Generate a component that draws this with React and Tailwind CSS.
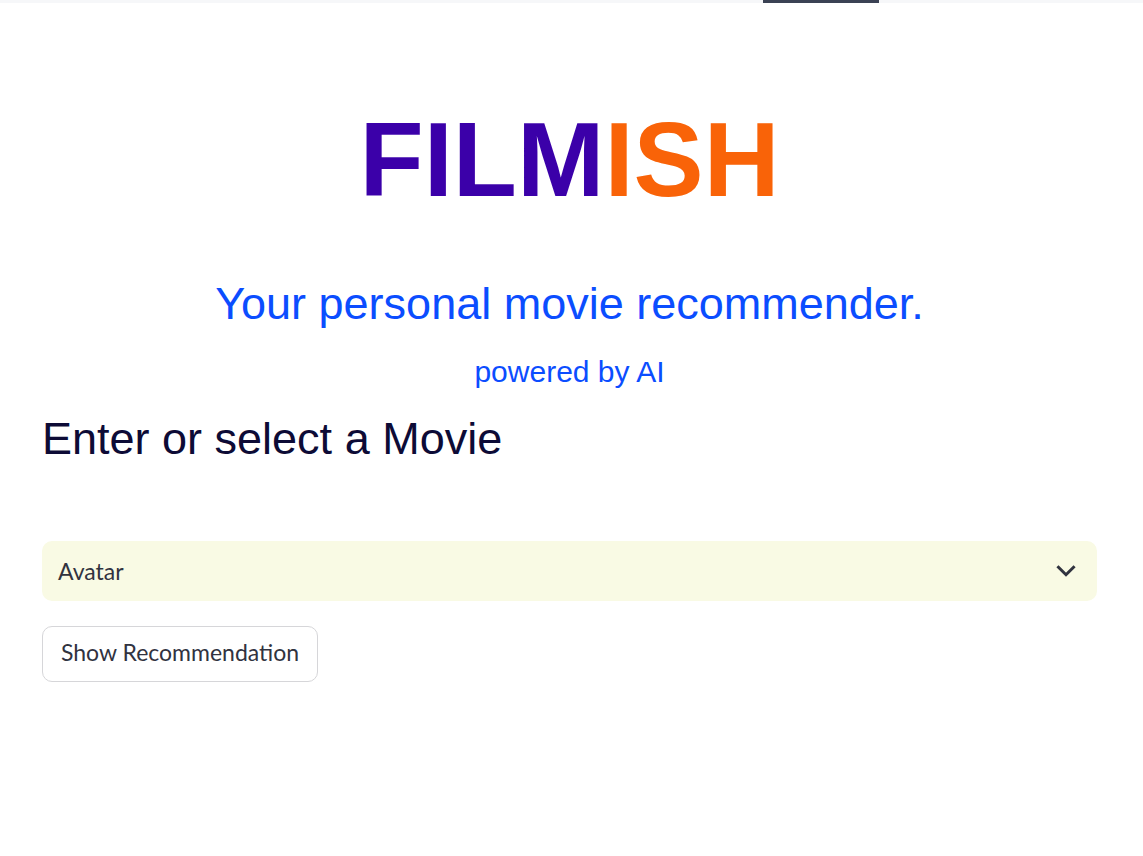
export default function App() {
  return (
    <div className="min-h-screen bg-white">
      {/* top decoration bar */}
      <div className="flex h-[3px] bg-[#f6f7f9]">
        <div className="ml-[763px] h-[3px] w-[116px] bg-[#3b4254]" />
      </div>

      <div className="pl-[42px] pr-[46px] font-['Liberation_Sans',Arial,sans-serif]">
        <h1 className="mt-[104px] text-center text-[105px] font-bold leading-none">
          <span className="text-[#3b00a9]">FILM</span>
          <span className="text-[#f96308]">ISH</span>
        </h1>

        <p className="mt-[69px] text-center text-[45px] leading-none text-[#0b4dff]">
          Your personal movie recommender.
        </p>

        <p className="mt-[31px] text-center text-[30px] leading-none text-[#0b4dff]">
          powered by AI
        </p>

        <h2 className="mt-[29px] text-[45px] leading-none text-[#0d0b36]">
          Enter or select a Movie
        </h2>

        <div className="mt-[80px] flex h-[60px] items-center justify-between rounded-[10px] bg-[#f9fae4] pl-[16px] pr-[16px] font-['Lato',sans-serif] text-[23px] text-[#31333f]">
          <span>Avatar</span>
          <svg width="30" height="30" viewBox="0 0 24 24" fill="none" stroke="#31333f" strokeWidth="2.4" strokeLinecap="square">
            <path d="M6 9l6 6 6-6" />
          </svg>
        </div>

        <button className="mt-[25px] flex h-[56px] items-center rounded-[10px] border border-[#d6d6d9] bg-white px-[18px] pb-[3px] font-['Lato',sans-serif] text-[23px] text-[#31333f]">
          Show Recommendation
        </button>
      </div>
    </div>
  );
}
